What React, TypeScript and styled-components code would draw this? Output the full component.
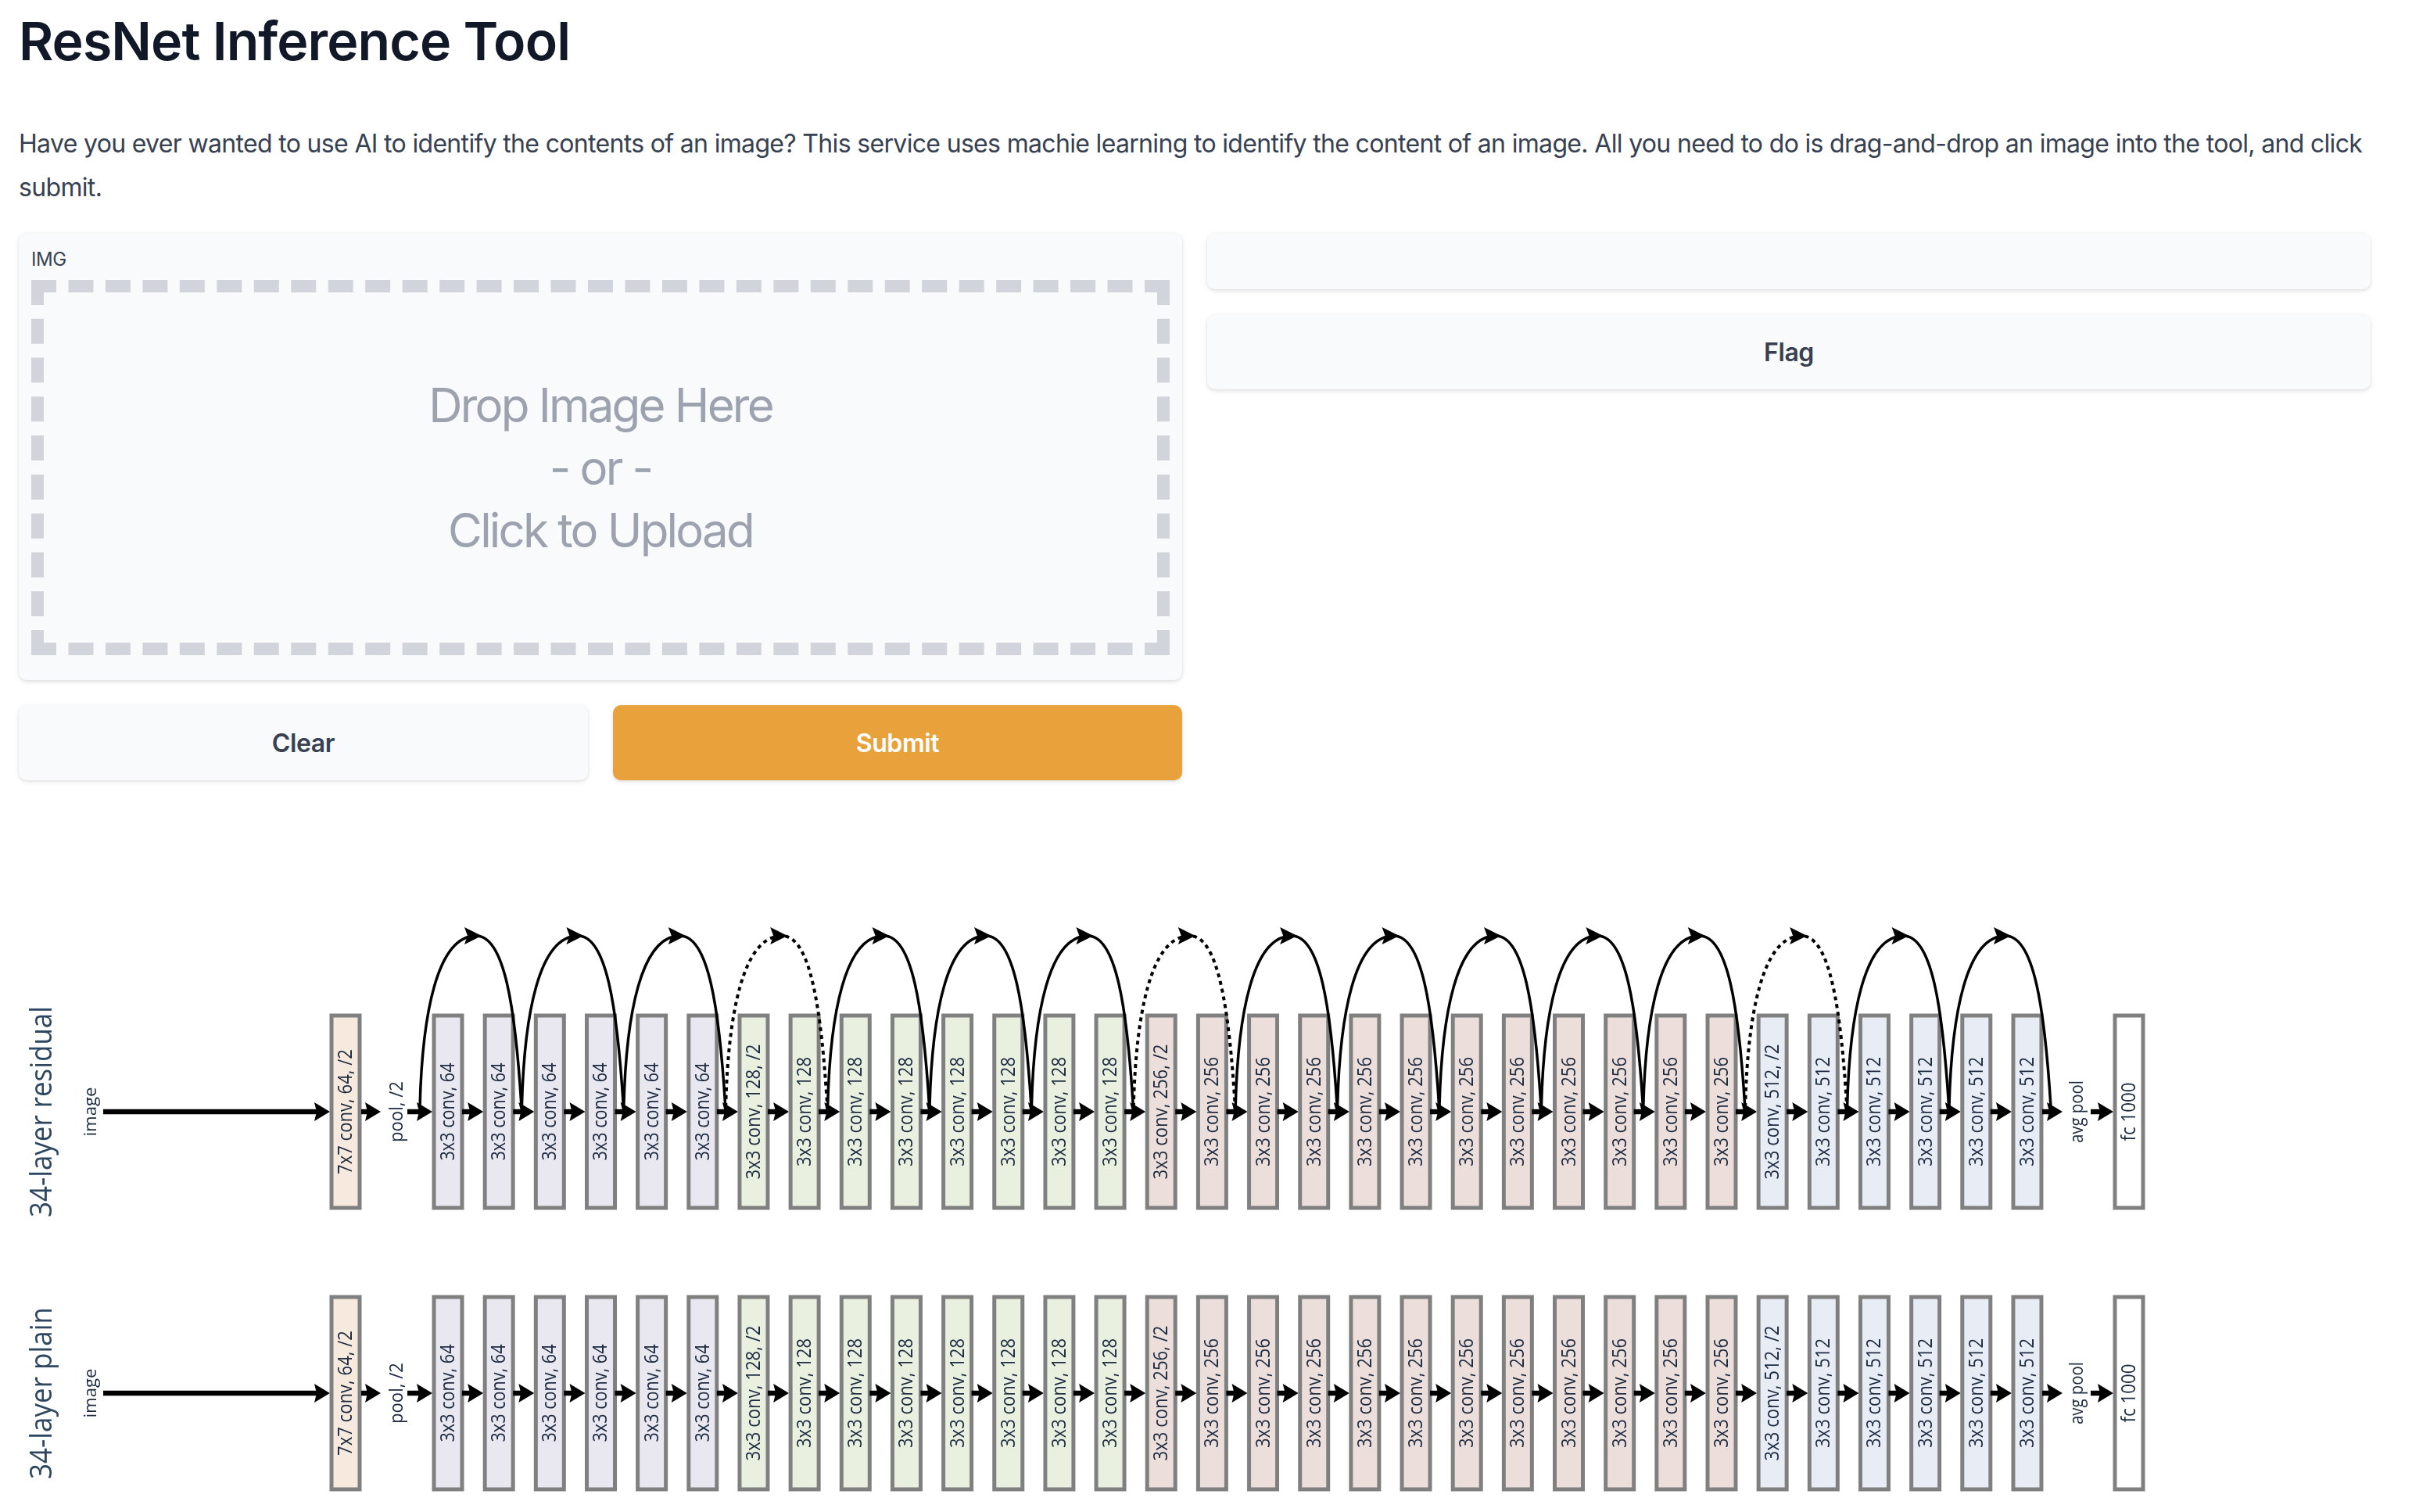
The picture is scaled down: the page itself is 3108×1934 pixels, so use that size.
import React from 'react'
import styled, { createGlobalStyle } from 'styled-components'

const GlobalStyle = createGlobalStyle`
  html, body {
    margin: 0;
    padding: 0;
    background: #ffffff;
  }
  body {
    font-family: "Inter", "Liberation Sans", sans-serif;
    color: #374151;
  }
`

type Tint = 'init' | 'c64' | 'c128' | 'c256' | 'c512' | 'fc'

const TINTS: Record<Tint, string> = {
  init: '#f6e9de',
  c64: '#e9e8f1',
  c128: '#e9f0df',
  c256: '#ecdeda',
  c512: '#e8ecf5',
  fc: '#ffffff',
}

const BLOCK_START = 553
const BLOCK_STEP = 65.16
const BLOCK_W = 40
const BLOCK_H = 250
const ARC_START = 537
const ARC_STEP = 130.4
const DASHED_ARCS = [3, 7, 13]

// 32 conv layers, four stages
const convBlocks = Array.from({ length: 32 }, (_, i) => {
  const stage = i < 6 ? 0 : i < 14 ? 1 : i < 26 ? 2 : 3
  const filters = [64, 128, 256, 512][stage]
  const first = i === 6 || i === 14 || i === 26
  return {
    x: BLOCK_START + i * BLOCK_STEP,
    tint: (['c64', 'c128', 'c256', 'c512'] as Tint[])[stage],
    label: `3x3 conv, ${filters}${first ? ', /2' : ''}`,
    length: first ? 173 : filters === 64 ? 125 : 140,
  }
})

export default function App() {
  return (
    <Page>
      <GlobalStyle />
      <Title>ResNet Inference Tool</Title>
      <Intro>
        Have you ever wanted to use AI to identify the contents of an image? This service uses machie learning to identify the content of an image. All you need to do is drag-and-drop an image into the tool, and click submit.
      </Intro>

      <Columns>
        <Column>
          <Panel>
            <PanelLabel>IMG</PanelLabel>
            <DropZone>
              <span>Drop Image Here</span>
              <span>- or -</span>
              <span>Click to Upload</span>
            </DropZone>
          </Panel>
          <ButtonRow>
            <ActionButton>Clear</ActionButton>
            <ActionButton $primary>Submit</ActionButton>
          </ButtonRow>
        </Column>
        <Column>
          <OutputBox />
          <ActionButton>Flag</ActionButton>
        </Column>
      </Columns>

      <Diagram viewBox="24 1100 3008 834" aria-label="ResNet architecture">
        <defs>
          <filter id="soften" x="-2%" y="-2%" width="104%" height="104%">
            <feGaussianBlur stdDeviation="0.7" />
          </filter>
        </defs>
        <g filter="url(#soften)">
          <Network cy={1422} name="34-layer residual" nameLength={270} residual />
          <Network cy={1782} name="34-layer plain" nameLength={220} />
        </g>
      </Diagram>
    </Page>
  )
}

function Network({ cy, name, nameLength, residual }: { cy: number; name: string; nameLength: number; residual?: boolean }) {
  return (
    <g>
      <SideText x={51} y={cy} length={nameLength} $size={38} $color="#2f4660">{name}</SideText>
      <SideText x={114} y={cy} length={63} $size={22}>image</SideText>
      <Arrow from={132} to={422} y={cy} />

      <Block x={422} cy={cy} tint="init" label="7x7 conv, 64, /2" length={160} />
      <Arrow from={462} to={487} y={cy} />
      <SideText x={506} y={cy} length={78} $size={23}>pool, /2</SideText>
      <Arrow from={521} to={553} y={cy} />

      {convBlocks.map((b, i) => (
        <React.Fragment key={i}>
          <Block x={b.x} cy={cy} tint={b.tint} label={b.label} length={b.length} />
          {i < 31 && <Arrow from={b.x + BLOCK_W - 2} to={b.x + BLOCK_STEP} y={cy} />}
        </React.Fragment>
      ))}

      <Arrow from={2612} to={2638} y={cy} />
      <SideText x={2655} y={cy} length={80} $size={23}>avg pool</SideText>
      <Arrow from={2674} to={2703} y={cy} />
      <Block x={2703} cy={cy} tint="fc" label="fc 1000" length={75} />

      {residual && Array.from({ length: 16 }, (_, i) => (
        <Skip key={i} x={ARC_START + i * ARC_STEP} top={cy - 225} y={cy} dashed={DASHED_ARCS.includes(i)} />
      ))}
    </g>
  )
}

function Block({ x, cy, tint, label, length }: { x: number; cy: number; tint: Tint; label: string; length: number }) {
  return (
    <g>
      <BlockRect x={x + 2} y={cy - BLOCK_H / 2 + 2} width={BLOCK_W - 4} height={BLOCK_H - 4} $fill={TINTS[tint]} />
      <SideText x={x + 18} y={cy} length={length} $size={25}>{label}</SideText>
    </g>
  )
}

function SideText({ x, y, length, children, $size, $color }: { x: number; y: number; length: number; children: React.ReactNode; $size: number; $color?: string }) {
  return (
    <RotatedLabel
      transform={`translate(${x} ${y}) rotate(-90)`}
      textLength={length}
      lengthAdjust="spacingAndGlyphs"
      $size={$size}
      $color={$color}
    >
      {children}
    </RotatedLabel>
  )
}

function Arrow({ from, to, y }: { from: number; to: number; y: number }) {
  return (
    <g>
      <ArrowLine x1={from} x2={to - 12} y1={y} y2={y} />
      <polygon points={`${to},${y} ${to - 20},${y - 12} ${to - 17},${y} ${to - 20},${y + 12}`} fill="#000" />
    </g>
  )
}

function Skip({ x, top, y, dashed }: { x: number; top: number; y: number; dashed: boolean }) {
  const apex = x + 72
  const end = x + 130
  return (
    <g>
      <SkipPath
        d={`M${x} ${y - 6} C${x + 3} ${top + 100} ${x + 22} ${top} ${apex} ${top} C${apex + 36} ${top} ${end - 8} ${top + 90} ${end} ${y - 6}`}
        $dashed={dashed}
      />
      <polygon points={`${apex + 7},${top} ${apex - 15},${top - 11} ${apex - 11},${top} ${apex - 15},${top + 11}`} fill="#000" />
    </g>
  )
}

const Page = styled.div`
  box-sizing: border-box;
  width: 3108px;
  height: 1934px;
  padding: 0 76px 0 24px;
  overflow: hidden;
`

const Title = styled.h1`
  margin: 0;
  padding-top: 12px;
  font-size: 68px;
  line-height: 80px;
  font-weight: 600;
  letter-spacing: -0.9px;
  color: #111827;
`

const Intro = styled.p`
  margin: 64px 0 0;
  font-size: 32px;
  line-height: 56px;
  letter-spacing: -0.67px;
  color: #374151;
`

const Columns = styled.div`
  display: grid;
  grid-template-columns: 1488px 1488px;
  gap: 32px;
  margin-top: 30px;
`

const Column = styled.div`
  display: flex;
  flex-direction: column;
  gap: 32px;
`

const Surface = styled.div`
  background: #f9fafb;
  border-radius: 10px;
  box-shadow: 0 2px 6px rgba(0, 0, 0, 0.1), 0 1px 3px rgba(0, 0, 0, 0.06);
`

const Panel = styled(Surface)`
  box-sizing: border-box;
  height: 572px;
  padding: 16px;
  display: flex;
  flex-direction: column;
`

const PanelLabel = styled.div`
  font-size: 24px;
  line-height: 32px;
  padding-top: 2px;
  margin-bottom: 10px;
  letter-spacing: -0.4px;
  color: #374151;
`

const DropZone = styled.div`
  box-sizing: border-box;
  height: 480px;
  border: 16px dashed #d1d5db;
  display: flex;
  flex-direction: column;
  align-items: center;
  justify-content: center;
  font-size: 60px;
  line-height: 80px;
  letter-spacing: -2.8px;
  color: #9ca3af;
`

const ButtonRow = styled.div`
  display: grid;
  grid-template-columns: 1fr 1fr;
  gap: 32px;
`

const ActionButton = styled(Surface).attrs({ as: 'button' })<{ $primary?: boolean }>`
  height: 96px;
  border: none;
  font-family: inherit;
  font-size: 32px;
  font-weight: 600;
  letter-spacing: -0.4px;
  background: ${(p) => (p.$primary ? '#e9a23b' : '#f9fafb')};
  color: ${(p) => (p.$primary ? '#ffffff' : '#374151')};
`

const OutputBox = styled(Surface)`
  height: 72px;
`

const Diagram = styled.svg`
  display: block;
  width: 3008px;
  height: 834px;
  margin-top: 102px;
`

const BlockRect = styled.rect<{ $fill: string }>`
  fill: ${(p) => p.$fill};
  stroke: #808080;
  stroke-width: 5px;
`

const RotatedLabel = styled.text<{ $size: number; $color?: string }>`
  font-family: "Open Sans", "DejaVu Sans", sans-serif;
  font-size: ${(p) => p.$size}px;
  font-weight: 500;
  fill: ${(p) => p.$color ?? '#1c2a40'};
  text-anchor: middle;
  dominant-baseline: central;
`

const ArrowLine = styled.line`
  stroke: #000;
  stroke-width: 6.5px;
`

const SkipPath = styled.path<{ $dashed: boolean }>`
  fill: none;
  stroke: #000;
  stroke-width: ${(p) => (p.$dashed ? 4 : 3.5)}px;
  stroke-dasharray: ${(p) => (p.$dashed ? '5 5' : 'none')};
`
